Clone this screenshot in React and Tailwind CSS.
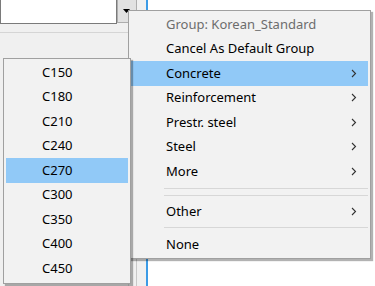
const grades = ['C150', 'C180', 'C210', 'C240', 'C270', 'C300', 'C350', 'C400', 'C450'];

const mainItems = [
  { label: 'Concrete', sub: true, active: true },
  { label: 'Reinforcement', sub: true },
  { label: 'Prestr. steel', sub: true },
  { label: 'Steel', sub: true },
  { label: 'More', sub: true },
];

function Arrow() {
  return (
    <svg width="6" height="9" viewBox="0 0 6 9" className="mr-[11px]">
      <path d="M1 1l3.5 3.5L1 8" fill="none" stroke="#333" strokeWidth="1.1" />
    </svg>
  );
}

function MenuRow({ label, sub, active, muted }) {
  return (
    <div
      className={`h-[24.5px] flex items-center justify-between pl-[35px] ${
        active ? 'bg-[#91c9f7]' : ''
      } ${muted ? 'text-[#6d6d6d]' : 'text-black'}`}
    >
      <span>{label}</span>
      {sub && <Arrow />}
    </div>
  );
}

function Separator({ top = 'pt-[4px]' }) {
  return (
    <div className={`h-[8px] ${top} pl-[33px]`}>
      <div className="w-full h-px bg-[#d7d7d7]" />
    </div>
  );
}

export default function App() {
  return (
    <div
      className="relative w-[375px] h-[286px] overflow-hidden bg-white text-[13px]"
      style={{ fontFamily: '"Noto Sans", "Open Sans", sans-serif' }}
    >
      {/* background window */}
      <div className="flex h-full">
        <div className="w-[129px] h-full flex flex-col bg-[#f0f0f0] border-r border-[#d5d5d5]">
          <div className="h-[33px] border-b border-[#d5d5d5] flex items-start">
            <div className="w-[117px] h-[24px] bg-white border border-t-0 border-[#7a7a7a]" />
          </div>
        </div>
        <div className="w-[8px] h-full bg-[#f0f0f0] border-r border-[#c8c8c8]" />
        <div className="w-[9px] h-full bg-[#f0f0f0]" />
        <div className="w-[2px] h-full bg-[#3c9be6]" />
        <div className="flex-1 h-full bg-white" />
      </div>

      {/* dropdown button */}
      <div className="absolute left-[117px] top-0 w-[20px] h-[23px] bg-[#e1e1e1] border border-t-0 border-[#adadad]">
        <svg width="7" height="5" viewBox="0 0 7 5" className="absolute left-[5px] top-[9px]">
          <path d="M0 0h7L3.5 4z" fill="#000" />
        </svg>
      </div>

      {/* main context menu */}
      <div className="absolute left-[128px] top-[10px] w-[243px] h-[249px] bg-[#f2f2f2] border border-[#a0a0a0] shadow-[2px_2px_1px_rgba(0,0,0,0.3)] px-[2px] pt-[1px]">
        <MenuRow label="Group: Korean_Standard" muted />
        <MenuRow label="Cancel As Default Group" />
        {mainItems.map((it) => (
          <MenuRow key={it.label} {...it} />
        ))}
        <Separator />
        <Separator top="pt-[3px]" />
        <MenuRow label="Other" sub />
        <Separator top="pt-[3px]" />
        <MenuRow label="None" />
      </div>

      {/* concrete grades submenu */}
      <div className="absolute left-[3px] top-[58px] w-[128px] h-[226px] bg-[#f2f2f2] border border-[#a0a0a0] shadow-[2px_2px_1px_rgba(0,0,0,0.3)] px-[2px] pt-[1px]">
        {grades.map((g) => (
          <div
            key={g}
            className={`h-[24.5px] flex items-center pl-[36px] ${g === 'C270' ? 'bg-[#91c9f7]' : ''}`}
          >
            {g}
          </div>
        ))}
      </div>
    </div>
  );
}
